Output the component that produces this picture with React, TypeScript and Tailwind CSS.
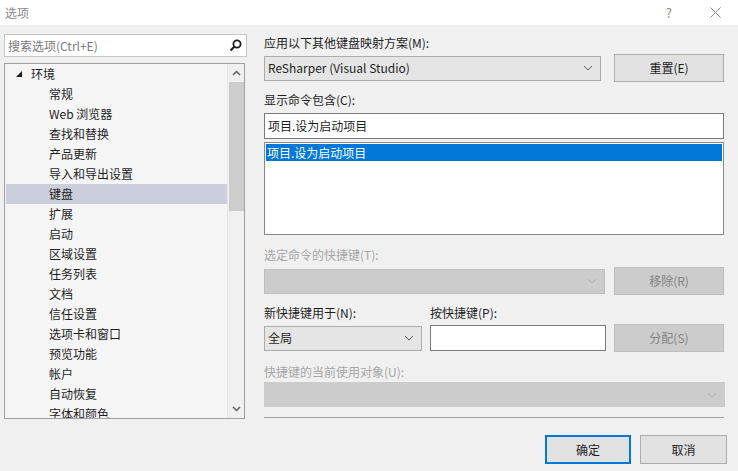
import React from "react";

const font = { fontFamily: '"Segoe UI", "Noto Sans CJK SC", "Liberation Sans", sans-serif' };

function Chevron({ color = "#606060" }: { color?: string }) {
  return (
    <svg width="10" height="6" viewBox="0 0 10 6" fill="none">
      <path d="M1 1 L5 5 L9 1" stroke={color} strokeWidth="1" />
    </svg>
  );
}

const items = [
  "常规",
  "Web 浏览器",
  "查找和替换",
  "产品更新",
  "导入和导出设置",
  "键盘",
  "扩展",
  "启动",
  "区域设置",
  "任务列表",
  "文档",
  "信任设置",
  "选项卡和窗口",
  "预览功能",
  "帐户",
  "自动恢复",
  "字体和颜色",
];

export default function App() {
  return (
    <div className="w-[738px] h-[471px] bg-[#f0f0f0] flex flex-col overflow-hidden text-[12px] text-[#1e1e1e]" style={font}>
      {/* Title bar */}
      <div className="h-[25px] bg-white flex items-center shrink-0">
        <span className="pl-[5px] text-[#8a8a8a] text-[12px]">选项</span>
        <div className="flex-1" />
        <span className="text-[#8a8a8a] text-[13px] mr-[38px]">?</span>
        <svg width="11" height="11" viewBox="0 0 11 11" className="mr-[17px]">
          <path d="M0.5 0.5 L10.5 10.5 M10.5 0.5 L0.5 10.5" stroke="#8a8a8a" strokeWidth="1" />
        </svg>
      </div>

      <div className="flex flex-1">
        {/* Left column */}
        <div className="w-[247px] pl-[4px] pt-[9px] flex flex-col">
          <div className="h-[23px] w-[243px] bg-white border border-[#c5c5c5] flex items-center pl-[3px] pr-[4px]">
            <span className="text-[#7a7a7a] flex-1">搜索选项(Ctrl+E)</span>
            <svg width="13" height="13" viewBox="0 0 13 13">
              <circle cx="8" cy="5" r="3.6" stroke="#1e1e1e" strokeWidth="1.8" fill="none" />
              <path d="M5.5 7.5 L1.5 11.5" stroke="#1e1e1e" strokeWidth="2.2" />
            </svg>
          </div>
          <div className="mt-[6px] w-[241px] h-[356px] bg-[#f5f5f5] border border-[#a0a0a0] flex overflow-hidden">
            <div className="flex-1 flex flex-col pl-[1px]">
              <div className="h-[20px] flex items-center shrink-0">
                <svg width="8" height="8" viewBox="0 0 8 8" className="ml-[9px] mr-[8px]">
                  <path d="M7 1 L7 7 L1 7 Z" fill="#1e1e1e" />
                </svg>
                <span>环境</span>
              </div>
              {items.map((it) => (
                <div
                  key={it}
                  className={
                    "h-[20px] flex items-center pl-[43px] shrink-0 " +
                    (it === "键盘" ? "bg-[#cccedb]" : "")
                  }
                >
                  {it}
                </div>
              ))}
            </div>
            <div className="w-[17px] bg-[#f0f0f0] flex flex-col items-center border-l border-[#e8e8e8]">
              <div className="h-[18px] flex items-center justify-center">
                <svg width="9" height="6" viewBox="0 0 9 6">
                  <path d="M1 5 L4.5 1.5 L8 5" stroke="#606060" strokeWidth="1.5" fill="none" />
                </svg>
              </div>
              <div className="w-[15px] h-[129px] bg-[#cdcdcd]" />
              <div className="flex-1" />
              <div className="h-[18px] flex items-center justify-center">
                <svg width="9" height="6" viewBox="0 0 9 6">
                  <path d="M1 1 L4.5 4.5 L8 1" stroke="#606060" strokeWidth="1.5" fill="none" />
                </svg>
              </div>
            </div>
          </div>
        </div>

        {/* Right column */}
        <div className="ml-[17px] w-[463px] flex flex-col">
          <div className="mt-[10px] h-[16px] flex items-center">应用以下其他键盘映射方案(M):</div>
          <div className="mt-[3px] flex items-center">
            <div className="w-[337px] h-[25px] bg-[#e5e5e5] border border-[#acacac] flex items-center pl-[3px] pr-[7px]">
              <span className="flex-1">ReSharper (Visual Studio)</span>
              <Chevron />
            </div>
            <div className="ml-[13px] w-[110px] h-[28px] bg-[#e1e1e1] border border-[#adadad] flex items-center justify-center">
              重置(E)
            </div>
          </div>
          <div className="mt-[10px] h-[16px] flex items-center">显示命令包含(C):</div>
          <div className="mt-[5px] w-[460px] h-[26px] bg-white border border-[#7a7a7a] flex items-center pl-[3px]">
            项目.设为启动项目
          </div>
          <div className="mt-[3px] w-[460px] h-[93px] bg-white border border-[#828790] p-[1px]">
            <div className="h-[17px] bg-[#0078d7] text-white flex items-center pl-[1px]">项目.设为启动项目</div>
          </div>
          <div className="mt-[12px] h-[16px] flex items-center text-[#a6a6a6]">选定命令的快捷键(T):</div>
          <div className="mt-[4px] flex items-center">
            <div className="w-[341px] h-[25px] bg-[#cccccc] border border-[#bfbfbf] flex items-center justify-end pr-[7px]">
              <Chevron color="#b0b0b0" />
            </div>
            <div className="ml-[9px] w-[110px] h-[28px] bg-[#cccccc] border border-[#bfbfbf] flex items-center justify-center text-[#838383]">
              移除(R)
            </div>
          </div>
          <div className="mt-[10px] h-[16px] flex items-center">
            <span className="w-[166px]">新快捷键用于(N):</span>
            <span>按快捷键(P):</span>
          </div>
          <div className="mt-[3px] flex items-center">
            <div className="w-[158px] h-[25px] bg-[#e5e5e5] border border-[#acacac] flex items-center pl-[3px] pr-[7px]">
              <span className="flex-1">全局</span>
              <Chevron />
            </div>
            <div className="ml-[8px] w-[176px] h-[26px] bg-white border border-[#7a7a7a]" />
            <div className="ml-[8px] w-[110px] h-[28px] bg-[#cccccc] border border-[#bfbfbf] flex items-center justify-center text-[#838383]">
              分配(S)
            </div>
          </div>
          <div className="mt-[12px] h-[16px] flex items-center text-[#a6a6a6]">快捷键的当前使用对象(U):</div>
          <div className="mt-[2px] w-[461px] h-[25px] bg-[#cccccc] border border-[#cccccc] flex items-center justify-end pr-[7px]">
            <Chevron color="#b0b0b0" />
          </div>
          <div className="mt-[10px] w-[460px] h-[1px] bg-[#a0a0a0]" />
          <div className="mt-[17px] flex justify-end">
            <div className="w-[86px] h-[29px] bg-[#e1e1e1] border-2 border-[#0078d7] flex items-center justify-center">
              确定
            </div>
            <div className="ml-[9px] w-[87px] h-[29px] bg-[#e1e1e1] border border-[#adadad] flex items-center justify-center">
              取消
            </div>
          </div>
        </div>
      </div>
    </div>
  );
}
